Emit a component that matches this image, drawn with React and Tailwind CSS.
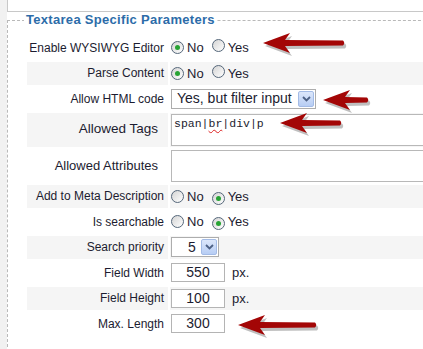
import React from 'react'

const FONT = { fontFamily: '"Liberation Sans", Arial, sans-serif' }

function Radio({ checked }) {
  return (
    <span className="relative inline-flex w-[13px] h-[13px] rounded-full border border-[#55677a] bg-gradient-to-br from-[#d4d4d4] to-white items-center justify-center shrink-0">
      {checked && <span className="w-[5px] h-[5px] rounded-full bg-[#27a334]" />}
    </span>
  )
}

function YesNo({ yes }) {
  return (
    <div className="flex items-center pl-[1px] text-[13px]">
      <Radio checked={!yes} />
      <span className="ml-[3px]">No</span>
      <span className="ml-[8px]"><Radio checked={yes} /></span>
      <span className="ml-[3px]">Yes</span>
    </div>
  )
}

function DropBtn() {
  return (
    <span className="flex items-center justify-center w-[16px] h-[16px] bg-gradient-to-b from-[#dce7fb] to-[#b7cdf4] border border-[#a3bbe6] rounded-[2px]">
      <svg width="9" height="6" viewBox="0 0 9 6">
        <path d="M1 1 L4.5 4.5 L8 1" fill="none" stroke="#4d6185" strokeWidth="1.8" />
      </svg>
    </span>
  )
}

function Row({ label, alt, h = 'h-[23.5px]', labelClass = 'pr-[4px] text-[12px]', children }) {
  return (
    <div className={`flex gap-[2px] ${h}`}>
      <div className={`w-[141px] shrink-0 flex items-center justify-end whitespace-nowrap ${labelClass} ${alt ? 'bg-[#f5f5f5]' : ''}`}>
        {label}
      </div>
      <div className={`flex-1 flex items-center ${alt ? 'bg-[#f5f5f5]' : ''}`}>{children}</div>
    </div>
  )
}

function NumBox({ value }) {
  return (
    <div className="ml-[1px] w-[54px] h-[19px] border border-[#b4b4b4] bg-white flex items-center justify-center text-[14px]">
      {value}
    </div>
  )
}

function Arrow({ x, y, len, head = 10 }) {
  const d = `M${x},${y} L${x + 27},${y - head} L${x + 22},${y - 3} L${x + len},${y - 2.5} Q${x + len + 2.5},${y} ${x + len},${y + 2.5} L${x + 22},${y + 3} L${x + 27},${y + head} Z`
  return (
    <g>
      <path d={d} fill="#000" opacity="0.25" transform="translate(2,3)" />
      <path d={d} fill="#a30606" />
    </g>
  )
}

export default function App() {
  return (
    <div className="relative w-[423px] h-[349px] overflow-hidden bg-[#f1f1f1] text-[13px] text-[#1c1c30]" style={FONT}>
      <div className="ml-[7px] bg-white h-full">
        {/* previous panel */}
        <div className="h-[12px] border-l border-b border-[#c8c8c8]" />

        <fieldset className="border-t border-l border-dashed border-[#b9b9b9] pl-[16px] pt-[8px] pb-4">
          <legend className="px-[2px] text-[13px] leading-[16px] font-bold text-[#2c6ca9] tracking-[0.3px]">
            Textarea Specific Parameters
          </legend>

          <div className="ml-[3px] flex flex-col gap-[2px]">
            <Row label="Enable WYSIWYG Editor"><YesNo yes={false} /></Row>
            <Row label="Parse Content" alt><YesNo yes={false} /></Row>
            <Row label="Allow HTML code">
              <div className="ml-[1px] w-[145px] h-[20px] border border-[#adadad] bg-white flex items-center justify-between pl-[5px] pr-[1px] text-[14px]">
                <span>Yes, but filter input</span>
                <DropBtn />
              </div>
            </Row>
            <Row label="Allowed Tags" alt h="h-[34px]" labelClass="pr-[10px] text-[13.5px]">
              <div className="ml-[1px] w-[270px] h-[32px] border border-[#b8b8b8] bg-white pl-[2px] pt-[2px] leading-[14px] text-[11.5px] self-center" style={{ fontFamily: '"Liberation Mono", "Courier New", monospace' }}>
                span|<span className="underline decoration-wavy decoration-[#d22] decoration-1 underline-offset-2">br</span>|div|p
              </div>
            </Row>
            <Row label="Allowed Attributes" h="h-[34px]" labelClass="pr-[10px] text-[13px]">
              <div className="ml-[1px] w-[270px] h-[32px] border border-[#b8b8b8] bg-white self-center" />
            </Row>
            <Row label="Add to Meta Description" alt><YesNo yes /></Row>
            <Row label="Is searchable"><YesNo yes /></Row>
            <Row label="Search priority" alt>
              <div className="ml-[1px] w-[48px] h-[20px] border border-[#adadad] bg-white flex items-center justify-between pl-[16px] pr-[1px] text-[14px]">
                <span>5</span>
                <DropBtn />
              </div>
            </Row>
            <Row label="Field Width">
              <NumBox value="550" />
              <span className="ml-[7px]">px.</span>
            </Row>
            <Row label="Field Height" alt>
              <NumBox value="100" />
              <span className="ml-[7px]">px.</span>
            </Row>
            <Row label="Max. Length">
              <NumBox value="300" />
            </Row>
          </div>
        </fieldset>
      </div>

      {/* callout arrows */}
      <svg className="absolute inset-0 pointer-events-none" width="423" height="349">
        <Arrow x={263} y={43} len={80} />
        <Arrow x={323} y={100} len={44} />
        <Arrow x={280} y={123} len={60} />
        <Arrow x={238} y={325} len={77} />
      </svg>
    </div>
  )
}
